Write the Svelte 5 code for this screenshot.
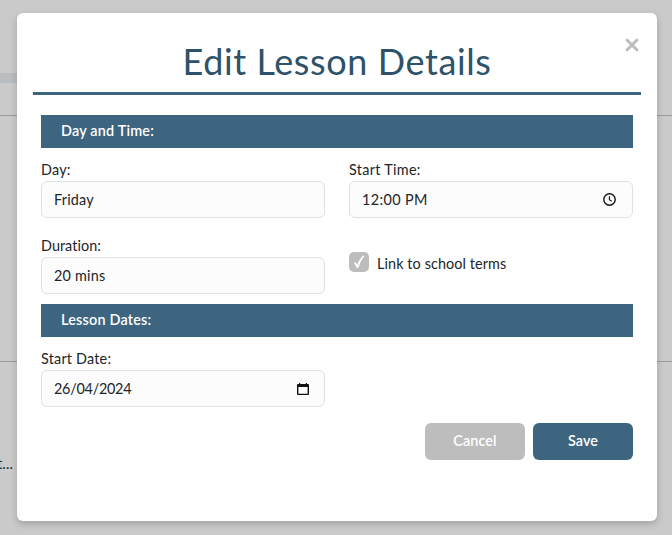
<script>
  let day = $state('Friday');
  let startTime = $state('12:00 PM');
  let duration = $state('20 mins');
  let startDate = $state('26/04/2024');
</script>

<div class="page">
  <div class="behind" aria-hidden="true">
    <div class="stripe"></div>
    <div class="row first"></div>
    <div class="row second"><span class="cut">t...</span></div>
  </div>

  <div class="modal" role="dialog" aria-labelledby="title">
    <button class="close" aria-label="Close">
      <svg width="14" height="14" viewBox="0 0 14 14"><path d="M2.2 2.2 11.8 11.8M11.8 2.2 2.2 11.8" /></svg>
    </button>
    <header><h1 id="title">Edit Lesson Details</h1></header>

    <form>
      <h2 class="s1">Day and Time:</h2>
      <div class="grid">
        <div class="field">
          <span class="label">Day:</span>
          <div class="input"><span>{day}</span></div>
        </div>
        <div class="field">
          <span class="label st">Start Time:</span>
          <div class="input time">
            <span>{startTime}</span>
            <svg width="15" height="15" viewBox="0 0 15 15">
              <circle cx="7.5" cy="7.5" r="5.7" fill="none" stroke="#111" stroke-width="1.4" />
              <path d="M7.4 4.2V7.7L9.9 9.4" fill="none" stroke="#111" stroke-width="1.1" />
            </svg>
          </div>
        </div>
        <div class="field">
          <span class="label du">Duration:</span>
          <div class="input"><span>{duration}</span></div>
        </div>
        <div class="check">
          <span class="box">
            <svg width="20" height="20" viewBox="0 0 20 20"><path d="M4.9 10.8C5.6 9.9 6.4 9.9 7 10.8L8.2 12.7C9.7 9.2 11.3 6.2 13.4 4.2C14 3.7 14.9 3.8 15.2 4.2C12.9 7.2 10.9 11 9.6 15.2C9.2 16.1 7.8 16.1 7.3 15.3Z" fill="#fff" /></svg>
          </span>
          <span class="link">Link to school terms</span>
        </div>
      </div>

      <h2 class="s2">Lesson Dates:</h2>
      <div class="grid">
        <div class="field">
          <span class="label">Start Date:</span>
          <div class="input date">
            <span>{startDate}</span>
            <svg width="14" height="14" viewBox="0 0 14 14">
              <path d="M3 1H4.2V2H9.8V1H11V2H12Q13 2 13 3V12Q13 13 12 13H2Q1 13 1 12V3Q1 2 2 2H3ZM2.4 5V11.8H11.6V5Z" fill="#111" fill-rule="evenodd" />
            </svg>
          </div>
        </div>
      </div>

      <div class="actions">
        <button type="button" class="btn cancel">Cancel</button>
        <button type="button" class="btn save">Save</button>
      </div>
    </form>
  </div>
</div>

<style>
  :global(body) { margin: 0; }
  .page {
    position: relative;
    box-sizing: border-box;
    width: 672px;
    height: 535px;
    padding: 13px 15px 0 17px;
    overflow: hidden;
    background: #cacaca;
    color: #212529;
    font: 14.4px/22px Lato, "Liberation Sans", sans-serif;
    letter-spacing: 0.2px;
  }
  .behind { position: absolute; inset: 0; padding-top: 73px; }
  .stripe { width: 17px; height: 10px; background: #b9bdc0; }
  .row { box-sizing: border-box; border-top: 1px solid #9c9c9c; }
  .first { margin-top: 32px; height: 246px; }
  .second { padding-top: 91px; }
  .cut { display: block; margin-left: -3px; white-space: nowrap; }
  .modal {
    position: relative;
    box-sizing: border-box;
    width: 640px;
    height: 508px;
    padding: 0 16px;
    border-radius: 6px;
    background: #fff;
    box-shadow: 0 3px 7px rgba(0, 0, 0, 0.2);
  }
  .close {
    position: absolute;
    top: 25px;
    right: 18px;
    width: 14px;
    height: 14px;
    padding: 0;
    border: 0;
    background: none;
  }
  .close svg { display: block; }
  .close path { stroke: #bdbdbd; stroke-width: 3; stroke-linecap: round; }
  header { box-sizing: border-box; height: 82px; padding-top: 25px; border-bottom: 3px solid #3d6580; }
  h1 {
    margin: 0;
    color: #2e5269;
    font-size: 36px;
    font-weight: 400;
    line-height: 46px;
    letter-spacing: 0.6px;
    text-align: center;
  }
  form { padding: 20px 8px 0; }
  h2 {
    height: 33px;
    margin: 0;
    padding-left: 20px;
    background: #3d6580;
    color: #fff;
    font-size: 14.4px;
    font-weight: 600;
    line-height: 32px;
    box-sizing: border-box;
  }
  .grid { display: grid; grid-template-columns: 284px 284px; gap: 16px 24px; padding-top: 10px; }
  .s2 { margin-top: 10px; }
  .label { display: block; height: 23px; line-height: 23px; }
  .st { letter-spacing: 0.3px; }
  .du { letter-spacing: 0.05px; }
  .input {
    display: flex;
    align-items: center;
    justify-content: space-between;
    box-sizing: border-box;
    height: 37px;
    padding: 0 12px;
    border: 1px solid #dee2e6;
    border-radius: 6px;
    background: #fcfcfc;
  }
  .input span { line-height: 21px; padding-bottom: 1px; }
  .time span { letter-spacing: 0.4px; }
  .date span { letter-spacing: -0.25px; }
  .time svg { margin-right: 3px; }
  .date svg { margin-right: 2px; }
  .check { display: flex; align-items: flex-start; gap: 8px; padding-top: 18px; }
  .link { line-height: 23px; letter-spacing: 0.1px; }
  .box { width: 20px; height: 20px; border-radius: 5px; background: #bdbdbd; }
  .box svg { display: block; }
  .actions { display: flex; justify-content: flex-end; gap: 8px; margin-top: 16px; }
  .btn {
    width: 100px;
    height: 37px;
    padding: 0 0 1px;
    border: 0;
    border-radius: 6px;
    color: #fff;
    font: 600 14.4px/36px Lato, "Liberation Sans", sans-serif;
    letter-spacing: 0.1px;
  }
  .cancel { background: #bdbdbd; }
  .save { background: #3d6580; }
</style>
